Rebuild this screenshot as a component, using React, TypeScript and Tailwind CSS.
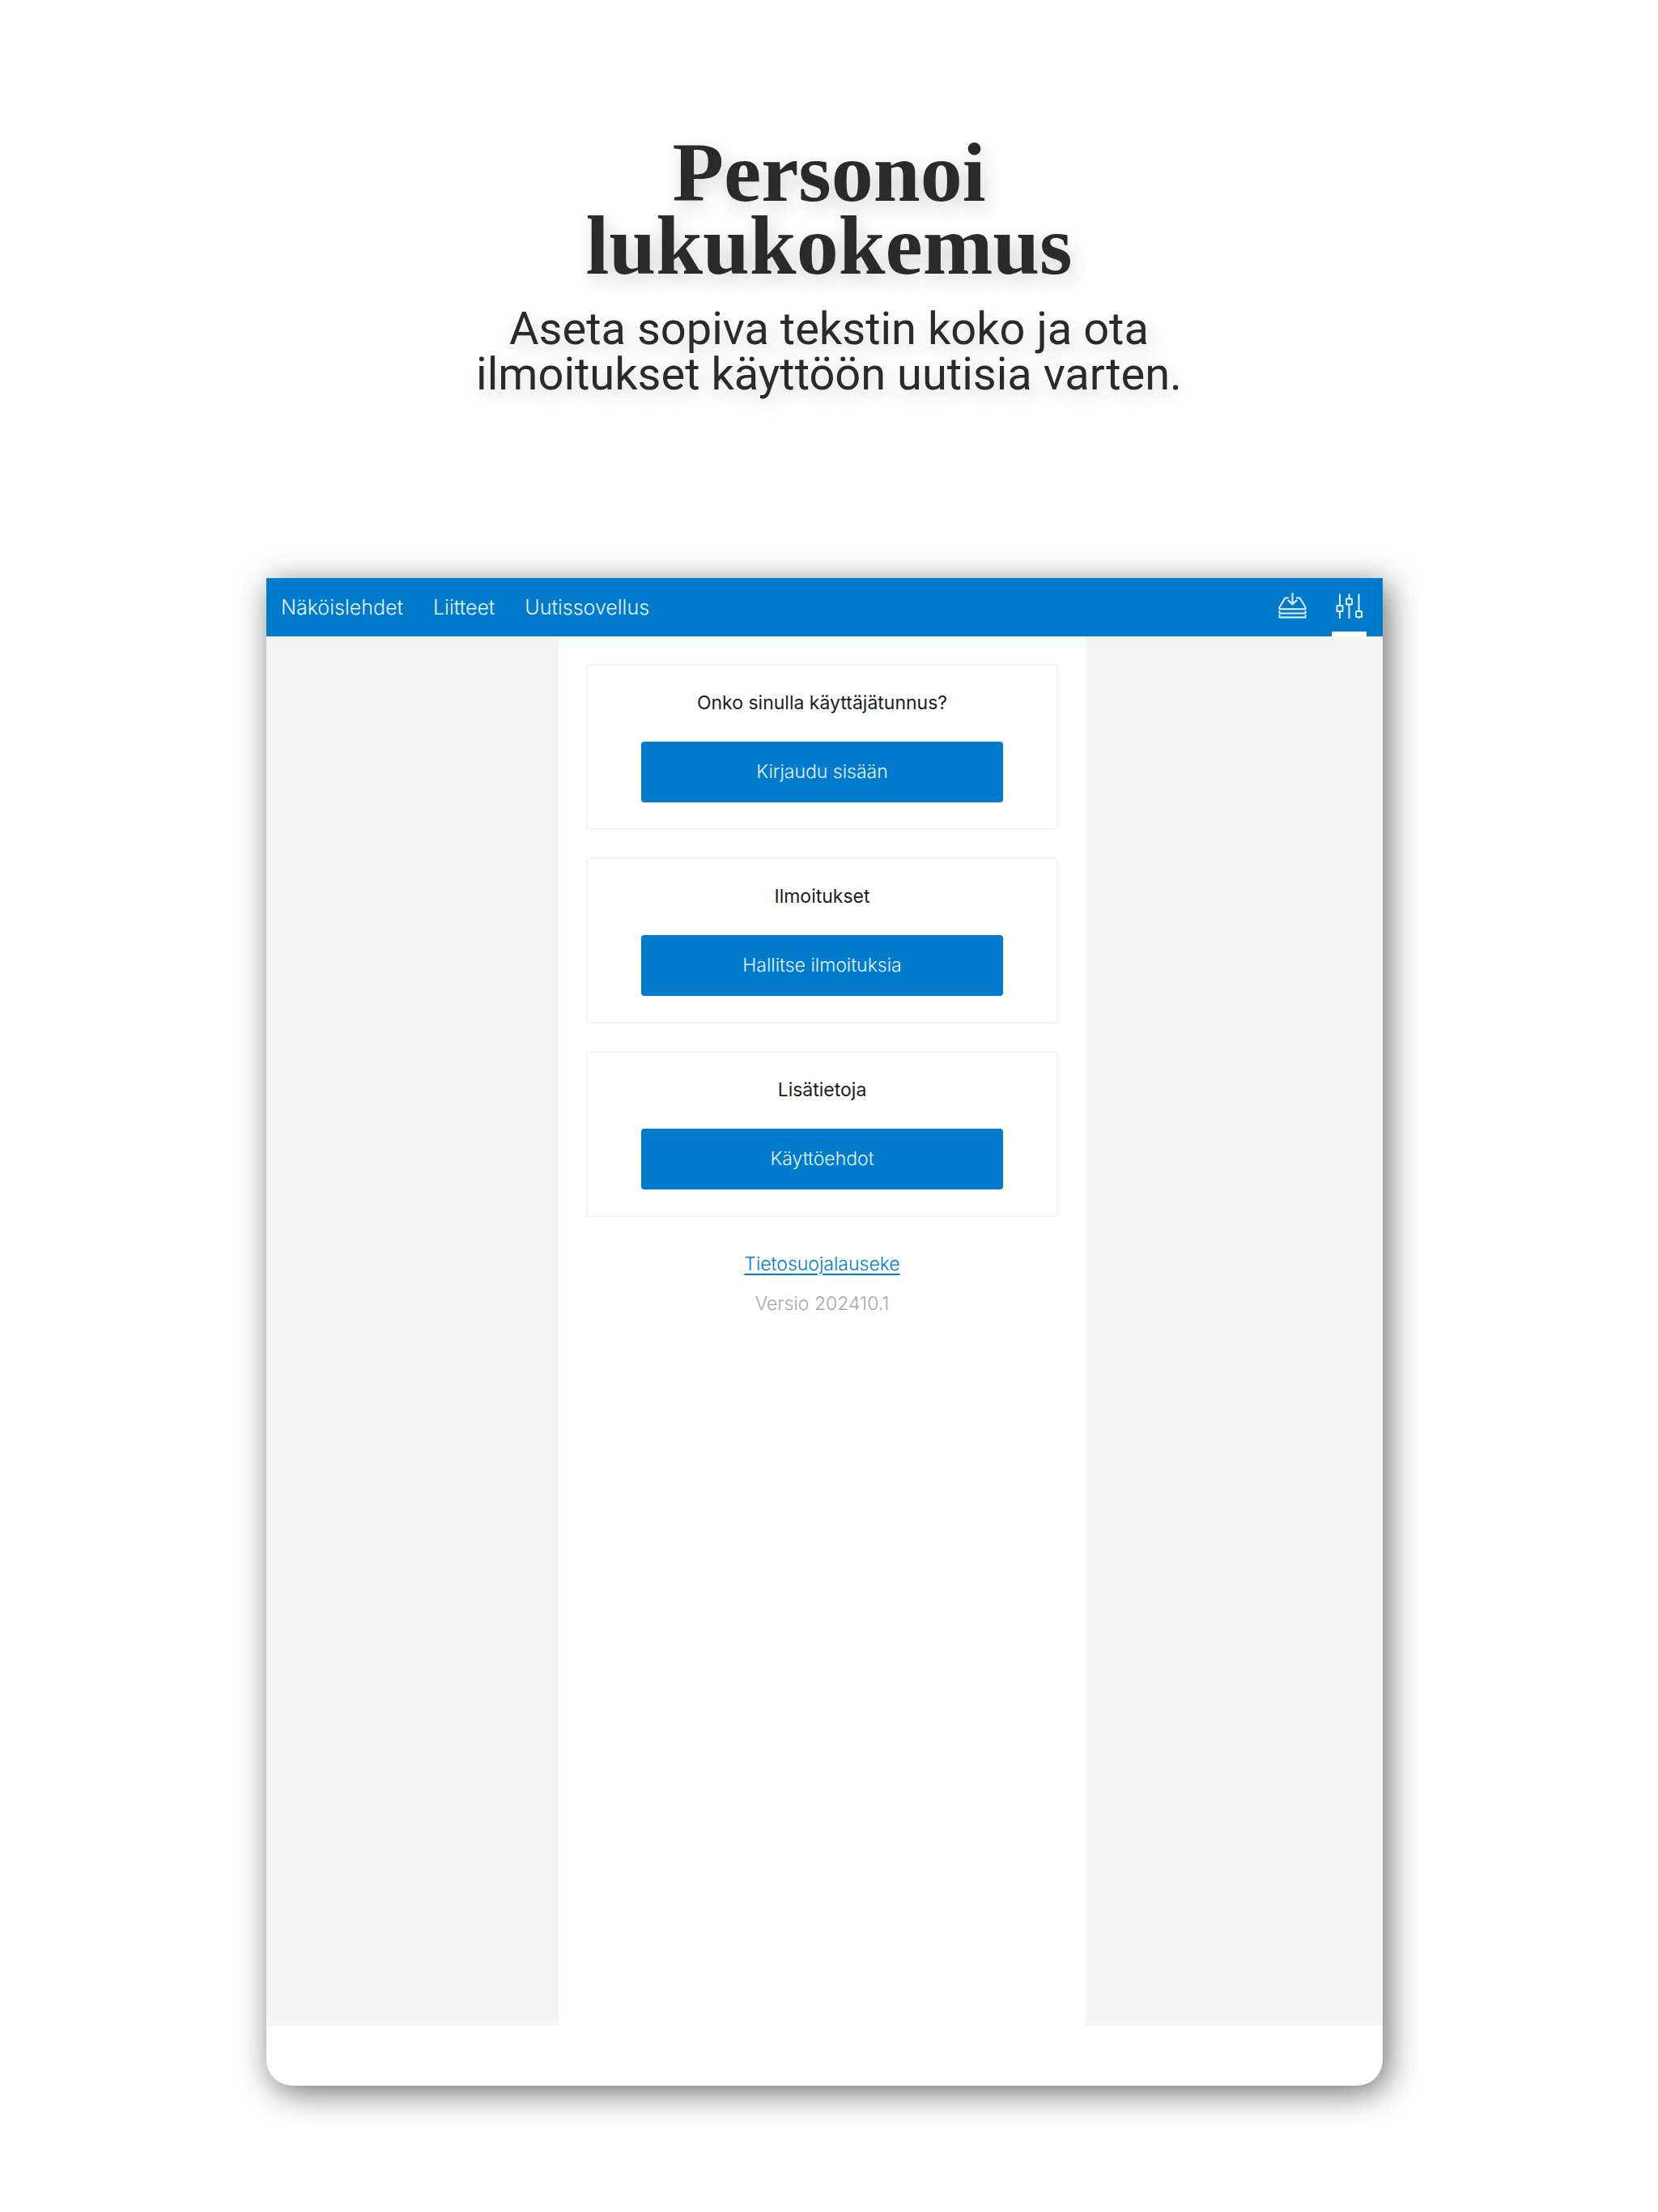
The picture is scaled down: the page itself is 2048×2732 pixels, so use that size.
import React from 'react';

interface SettingsCardProps {
  title: string;
  action: string;
}

const navItems = ['Näköislehdet', 'Liitteet', 'Uutissovellus'];

const cards: SettingsCardProps[] = [
  { title: 'Onko sinulla käyttäjätunnus?', action: 'Kirjaudu sisään' },
  { title: 'Ilmoitukset', action: 'Hallitse ilmoituksia' },
  { title: 'Lisätietoja', action: 'Käyttöehdot' },
];

const DownloadsIcon = () => (
  <svg width="36" height="32" viewBox="0 0 36 32" fill="none" stroke="currentColor" strokeWidth="2" strokeLinecap="round" strokeLinejoin="round" aria-hidden="true">
    <path d="M17.5 1v13M12.5 9.5l5 5 5-5" />
    <path d="M12 6.5H8.5L1.5 18v2.3h32V18L26.5 6.5H23" />
    <path d="M1.5 23v2.5h32V23M1.500 28v2.500h32V28" />
  </svg>
);

const SettingsIcon = () => (
  <svg width="34" height="32" viewBox="0 0 34 32" fill="none" stroke="currentColor" strokeWidth="2" aria-hidden="true">
    <path d="M5 .5V15M5 22v9M16.5 .5V6M16.5 13v18M28.5 .5V22M28.5 29v2" />
    <rect x="1.5" y="15" width="7" height="7" rx="0.5" />
    <rect x="13" y="6.5" width="7" height="7" rx="0.5" />
    <rect x="25" y="22" width="7" height="7" rx="0.5" />
  </svg>
);

const SettingsCard: React.FC<SettingsCardProps> = ({ title, action }) => (
  <section className="rounded border-2 border-[#f5f5f5] px-[66px] pt-[30px] pb-8">
    <h2 className="text-center text-[23px] leading-8 text-[#1c1c1c]">{title}</h2>
    <button className="mt-8 h-[75px] w-full rounded-sm bg-[#007aca] text-[23px] font-light text-[#e3f6ff]">
      {action}
    </button>
  </section>
);

export default function App() {
  return (
    <div className="flex min-h-screen flex-col bg-white pb-39 font-['Inter',sans-serif]">
      <header className="pt-42 text-center text-[#2a2a2a] text-shadow-[4px_8px_24px_rgb(0_0_0/0.18)]">
        <h1 className="font-['Liberation_Serif',serif] text-[104px] leading-[90px] font-bold">
          Personoi
          <br />
          lukukokemus
        </h1>
        <p className="mt-[30px] font-['Roboto',sans-serif] text-[56px] leading-[56px]">
          Aseta sopiva tekstin koko ja ota
          <br />
          ilmoitukset käyttöön uutisia varten.
        </p>
      </header>

      <main className="mt-56 mr-85 ml-[329px] flex flex-1 flex-col rounded-b-[32px] bg-white pb-[74px] shadow-[6px_8px_40px_rgb(0_0_0/0.58)]">
        <div className="flex h-18 items-center justify-between bg-[#007aca] pr-5 pl-[18px] text-[#e3f6ff]">
          <nav className="flex gap-[37px] text-[25px] leading-8 font-light">
            {navItems.map((item) => (
              <a key={item} href="#">
                {item}
              </a>
            ))}
          </nav>
          <div className="flex h-full gap-[26px]">
            <button aria-label="Lataukset" className="flex w-11 items-center justify-center pb-1">
              <DownloadsIcon />
            </button>
            <button aria-label="Asetukset" className="flex w-[43px] items-center justify-center border-b-6 border-white pt-1">
              <SettingsIcon />
            </button>
          </div>
        </div>

        <div className="grid flex-1 grid-cols-[361fr_651fr_367fr] bg-[#f5f5f5]">
          <div className="col-start-2 bg-white px-[34px] pt-[34px]">
            <div className="flex flex-col gap-[34px]">
              {cards.map((card) => (
                <SettingsCard key={card.title} {...card} />
              ))}
            </div>
            <div className="mt-[42px] text-center text-[23px] leading-8 font-light">
              <a href="#" className="text-[#007aca] underline decoration-2 underline-offset-4">
                Tietosuojalauseke
              </a>
              <p className="mt-[17px] text-[#a8a8a8]">Versio 202410.1</p>
            </div>
          </div>
        </div>
      </main>
    </div>
  );
}
